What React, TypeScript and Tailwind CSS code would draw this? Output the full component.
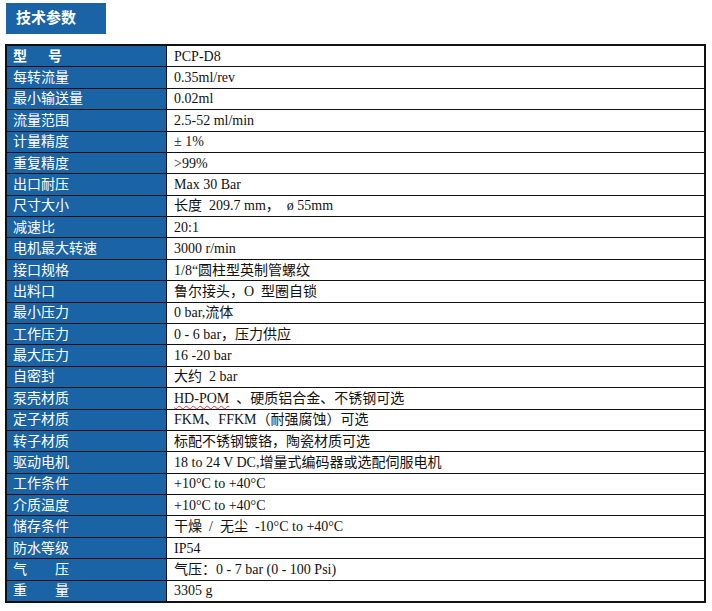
import React from "react";

const rows: [React.ReactNode, React.ReactNode][] = [
  [<span className="font-bold">型<span className="inline-block w-[21px]" />号</span>, "PCP-D8"],
  ["每转流量", "0.35ml/rev"],
  ["最小输送量", "0.02ml"],
  ["流量范围", "2.5-52 ml/min"],
  ["计量精度", "± 1%"],
  ["重复精度", ">99%"],
  ["出口耐压", "Max 30 Bar"],
  ["尺寸大小", "长度  209.7 mm，  ø 55mm"],
  ["减速比", "20:1"],
  ["电机最大转速", "3000 r/min"],
  ["接口规格", "1/8“圆柱型英制管螺纹"],
  ["出料口", "鲁尔接头，O  型圈自锁"],
  ["最小压力", "0 bar,流体"],
  ["工作压力", "0 - 6 bar，压力供应"],
  ["最大压力", "16 -20 bar"],
  ["自密封", "大约  2 bar"],
  [
    "泵壳材质",
    <span>
      <span className="underline decoration-wavy decoration-red-500 decoration-1 underline-offset-2">HD-POM</span>
      {"  、硬质铝合金、不锈钢可选"}
    </span>,
  ],
  ["定子材质", "FKM、FFKM（耐强腐蚀）可选"],
  ["转子材质", "标配不锈钢镀铬，陶瓷材质可选"],
  ["驱动电机", "18 to 24 V DC,增量式编码器或选配伺服电机"],
  ["工作条件", "+10°C to +40°C"],
  ["介质温度", "+10°C to +40°C"],
  ["储存条件", "干燥  /  无尘  -10°C to +40°C"],
  ["防水等级", "IP54"],
  [<span>气<span className="inline-block w-[28px]" />压</span>, "气压：0 - 7 bar (0 - 100 Psi)"],
  [<span>重<span className="inline-block w-[28px]" />量</span>, "3305 g"],
];

export default function App() {
  return (
    <div className="w-[712px] h-[611px] bg-white pt-[3px]">
      <div className="ml-[6px] w-[100px] h-[31px] bg-[#1a63a5] flex items-center pl-[10px] pb-[2px] text-white font-bold text-[15px] [font-family:'Noto_Sans_CJK_SC',sans-serif]">
        技术参数
      </div>
      <div className="mt-[10px] ml-[5px] w-[701px] h-[559px] border-2 border-[#111] bg-[#111] grid grid-cols-[159px_1fr] grid-rows-[repeat(26,minmax(0,1fr))] gap-px">
        {rows.map(([k, v], i) => (
          <React.Fragment key={i}>
            <div className="bg-[#1a63a5] text-white text-[14px] leading-none flex items-center pl-[6px] pb-[3px] whitespace-pre [font-family:'Noto_Sans_CJK_SC',sans-serif]">
              {k}
            </div>
            <div className="bg-white text-[#111] text-[14px] leading-none flex items-center pl-[7px] pt-[1px] whitespace-pre [font-family:'Liberation_Serif','Noto_Sans_CJK_SC',serif]">
              {v}
            </div>
          </React.Fragment>
        ))}
      </div>
    </div>
  );
}
